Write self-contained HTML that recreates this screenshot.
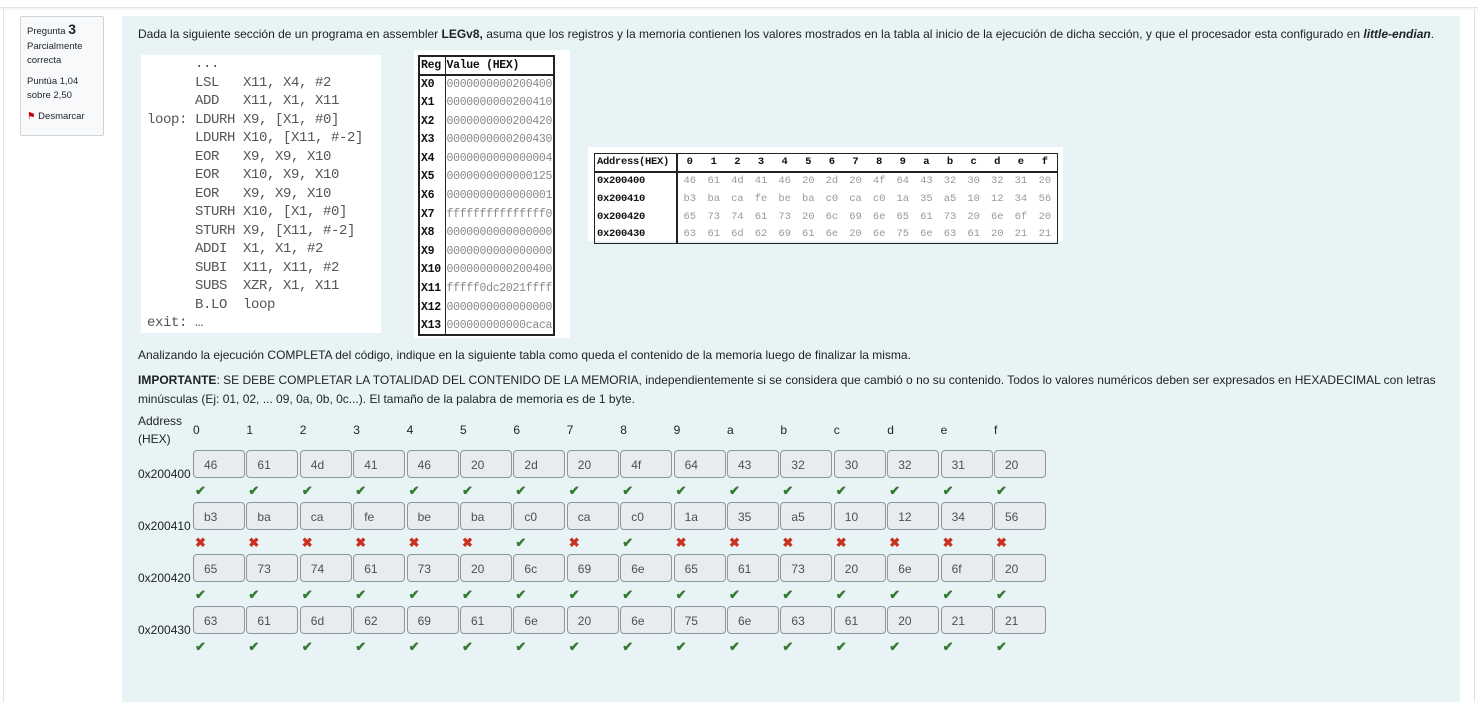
<!DOCTYPE html>
<html><head><meta charset="utf-8"><style>
*{box-sizing:border-box;margin:0;padding:0}
html,body{width:1478px;height:702px;overflow:hidden}
body{background:#fff;font-family:"Liberation Sans",sans-serif;position:relative;color:#1d2125}
.topline{position:absolute;left:0;top:0;width:1478px;height:8px;border-bottom:1px solid #e4e4e4;box-shadow:0 1px 3px rgba(0,0,0,.08)}
.lline{position:absolute;left:3px;top:9px;width:1px;height:693px;background:#e2e2e2}
.rline{position:absolute;left:1474px;top:9px;width:1px;height:693px;background:#e2e2e2}
.info{position:absolute;left:20px;top:16px;width:84px;height:120px;background:#f8f9fa;border:1px solid #cfd4d8;border-radius:2px;font-size:9.5px;padding:5px 6px;line-height:14.5px}
.info b{font-size:14px}
.main{position:absolute;left:122px;top:16px;width:1338px;height:700px;background:#e7f3f5;border-radius:3px}
.a{position:absolute;font-size:12px;white-space:nowrap}
.code{position:absolute;left:141px;top:55px;width:240px;height:278px;background:#fff;font-family:"Liberation Mono",monospace;font-size:14px;color:#555;line-height:18.5px;padding:0 0 0 6px;white-space:pre;letter-spacing:-0.4px}
.reg{position:absolute;left:414px;top:50px;width:156px;height:288px;background:#fff}
.reg table{position:absolute;left:4px;top:5px;border-collapse:collapse;font-family:"Liberation Mono",monospace;font-size:11.5px;border:2px solid #222}
.reg td{border-left:1px solid #222;height:18.6px;padding:0 1px;color:#888;letter-spacing:-0.3px}
.reg td:first-child{border-left:0;color:#111;font-weight:bold;width:26px}
.reg tr:first-child td{color:#111;font-weight:bold;border-bottom:2px solid #222}
.mem{position:absolute;left:588px;top:147px;width:475px;height:94px;background:#fff}
.mem table{position:absolute;left:6px;top:6px;border-collapse:collapse;border:1.5px solid #222;font-family:"Liberation Mono",monospace;font-size:10.5px;width:464px}
.mem td{height:18px;color:#999;text-align:center}
.mem td:first-child{color:#111;font-weight:bold;text-align:left;border-right:2px solid #222;width:82px;padding-left:2px;letter-spacing:-0.3px}
.mem tr:first-child td{color:#111;font-weight:bold;border-bottom:2px solid #222}
.c{position:absolute;width:52px;height:28px;background:#e9ecef;border:1px solid #8f959e;border-radius:4px;font-size:12px;color:#495057;padding:7px 0 0 10px}
.ok,.no{position:absolute;font-size:13px;font-weight:bold;line-height:12px}
.ok{color:#357a32}.no{color:#ca3120}
.h{position:absolute;font-size:12px;top:423px}
.l{position:absolute;left:138px;font-size:12px}
</style></head><body>
<div class="topline"></div><div class="lline"></div><div class="rline"></div>
<div class="info">Pregunta <b>3</b><br>Parcialmente correcta<div style="height:6px"></div>Puntúa 1,04 sobre 2,50<div style="height:6px"></div><span style="color:#c00">⚑</span> Desmarcar</div>
<div class="main"></div>
<div class="a" style="left:138px;top:27px">Dada la siguiente sección de un programa en assembler <b>LEGv8,</b> asuma que los registros y la memoria contienen los valores mostrados en la tabla al inicio de la ejecución de dicha sección, y que el procesador esta configurado en <b><i>little-endian</i></b>.</div>
<div class="code">      ...
      LSL   X11, X4, #2
      ADD   X11, X1, X11
loop: LDURH X9, [X1, #0]
      LDURH X10, [X11, #-2]
      EOR   X9, X9, X10
      EOR   X10, X9, X10
      EOR   X9, X9, X10
      STURH X10, [X1, #0]
      STURH X9, [X11, #-2]
      ADDI  X1, X1, #2
      SUBI  X11, X11, #2
      SUBS  XZR, X1, X11
      B.LO  loop
exit: …</div>
<div class="reg"><table>
<tr><td>Reg</td><td>Value (HEX)</td></tr>
<tr><td>X0</td><td>0000000000200400</td></tr>
<tr><td>X1</td><td>0000000000200410</td></tr>
<tr><td>X2</td><td>0000000000200420</td></tr>
<tr><td>X3</td><td>0000000000200430</td></tr>
<tr><td>X4</td><td>0000000000000004</td></tr>
<tr><td>X5</td><td>0000000000000125</td></tr>
<tr><td>X6</td><td>0000000000000001</td></tr>
<tr><td>X7</td><td>fffffffffffffff0</td></tr>
<tr><td>X8</td><td>0000000000000000</td></tr>
<tr><td>X9</td><td>0000000000000000</td></tr>
<tr><td>X10</td><td>0000000000200400</td></tr>
<tr><td>X11</td><td>fffff0dc2021ffff</td></tr>
<tr><td>X12</td><td>0000000000000000</td></tr>
<tr><td>X13</td><td>000000000000caca</td></tr>
</table></div>
<div class="mem"><table>
<tr><td>Address(HEX)</td><td>0</td><td>1</td><td>2</td><td>3</td><td>4</td><td>5</td><td>6</td><td>7</td><td>8</td><td>9</td><td>a</td><td>b</td><td>c</td><td>d</td><td>e</td><td>f</td></tr>
<tr><td>0x200400</td><td>46</td><td>61</td><td>4d</td><td>41</td><td>46</td><td>20</td><td>2d</td><td>20</td><td>4f</td><td>64</td><td>43</td><td>32</td><td>30</td><td>32</td><td>31</td><td>20</td></tr>
<tr><td>0x200410</td><td>b3</td><td>ba</td><td>ca</td><td>fe</td><td>be</td><td>ba</td><td>c0</td><td>ca</td><td>c0</td><td>1a</td><td>35</td><td>a5</td><td>10</td><td>12</td><td>34</td><td>56</td></tr>
<tr><td>0x200420</td><td>65</td><td>73</td><td>74</td><td>61</td><td>73</td><td>20</td><td>6c</td><td>69</td><td>6e</td><td>65</td><td>61</td><td>73</td><td>20</td><td>6e</td><td>6f</td><td>20</td></tr>
<tr><td>0x200430</td><td>63</td><td>61</td><td>6d</td><td>62</td><td>69</td><td>61</td><td>6e</td><td>20</td><td>6e</td><td>75</td><td>6e</td><td>63</td><td>61</td><td>20</td><td>21</td><td>21</td></tr>
</table></div>
<div class="a" style="left:138px;top:348px">Analizando la ejecución COMPLETA del código, indique en la siguiente tabla como queda el contenido de la memoria luego de finalizar la misma.</div>
<div class="a" style="left:138px;top:371px;white-space:normal;width:1310px;line-height:19px"><b>IMPORTANTE</b>: SE DEBE COMPLETAR LA TOTALIDAD DEL CONTENIDO DE LA MEMORIA, independientemente si se considera que cambió o no su contenido. Todos lo valores numéricos deben ser expresados en HEXADECIMAL con letras minúsculas (Ej: 01, 02, ... 09, 0a, 0b, 0c...). El tamaño de la palabra de memoria es de 1 byte.</div>
<div class="a" style="left:138px;top:412px;line-height:18px">Address<br>(HEX)</div>
<div id="g"></div>
<script>
var rows=[["46","61","4d","41","46","20","2d","20","4f","64","43","32","30","32","31","20"],
["b3","ba","ca","fe","be","ba","c0","ca","c0","1a","35","a5","10","12","34","56"],
["65","73","74","61","73","20","6c","69","6e","65","61","73","20","6e","6f","20"],
["63","61","6d","62","69","61","6e","20","6e","75","6e","63","61","20","21","21"]];
var labs=["0x200400","0x200410","0x200420","0x200430"],hx="0123456789abcdef",h="";
for(var j=0;j<16;j++)h+='<div class="h" style="left:'+(193+j*53.4)+'px">'+hx[j]+'</div>';
for(var r=0;r<4;r++){var t=450+r*52;h+='<div class="l" style="top:'+(t+17)+'px">'+labs[r]+'</div>';
for(var j=0;j<16;j++){var x=193+j*53.4;h+='<div class="c" style="left:'+x+'px;top:'+t+'px">'+rows[r][j]+'</div>';
var ok=r!=1||j==6||j==8;h+='<div class="'+(ok?'ok':'no')+'" style="left:'+(x+2)+'px;top:'+(t+35)+'px">'+(ok?'✔':'✖')+'</div>';}}
document.getElementById('g').innerHTML=h;
</script>
</body></html>
